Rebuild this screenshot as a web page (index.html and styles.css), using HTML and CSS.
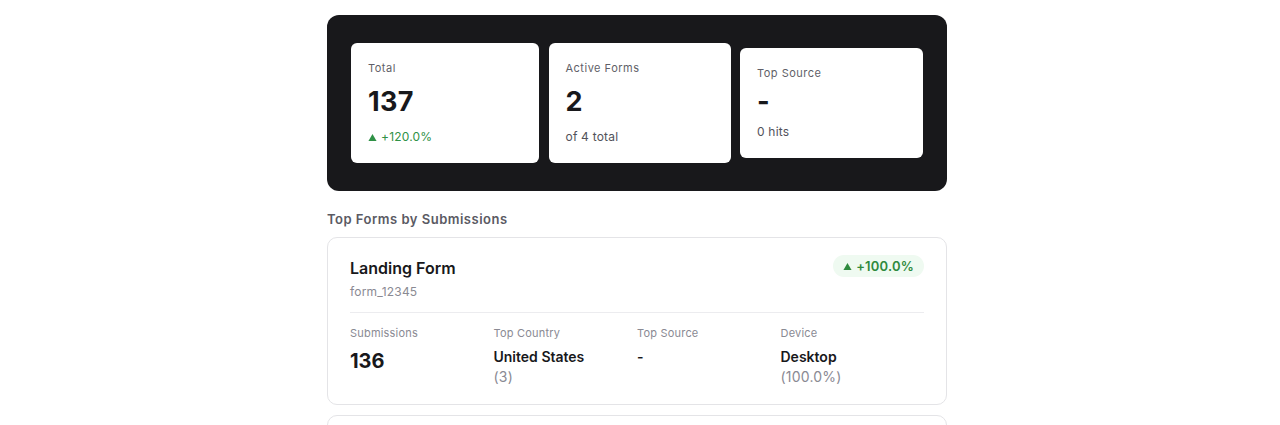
FILE: index.html
```html
<!doctype html>
<html>
<head>
<meta charset="utf-8">
<title>Form Analytics</title>
<link rel="stylesheet" href="styles.css">
</head>
<body>
<div class="main">
	<div class="summary">
		<div class="stat">
			<p class="stat-label">Total</p>
			<p class="stat-value">137</p>
			<p class="stat-sub up"><svg class="tri" viewBox="0 0 10 10"><path d="M5 1L9.5 9H0.5Z"/></svg>+120.0%</p>
		</div>
		<div class="stat">
			<p class="stat-label">Active Forms</p>
			<p class="stat-value">2</p>
			<p class="stat-sub">of 4 total</p>
		</div>
		<div class="stat">
			<p class="stat-label">Top Source</p>
			<p class="stat-value empty">-</p>
			<p class="stat-sub">0 hits</p>
		</div>
	</div>

	<h3 class="section-title">Top Forms by Submissions</h3>

	<div class="form-card">
		<div class="form-head">
			<div>
				<h4 class="form-name">Landing Form</h4>
				<p class="form-id">form_12345</p>
			</div>
			<span class="badge"><svg class="tri" viewBox="0 0 10 10"><path d="M5 1L9.5 9H0.5Z"/></svg>+100.0%</span>
		</div>
		<div class="form-stats">
			<div>
				<p class="fs-label">Submissions</p>
				<p class="fs-big">136</p>
			</div>
			<div>
				<p class="fs-label">Top Country</p>
				<p class="fs-value">United States</p>
				<p class="fs-sub">(3)</p>
			</div>
			<div>
				<p class="fs-label">Top Source</p>
				<p class="fs-value">-</p>
			</div>
			<div>
				<p class="fs-label">Device</p>
				<p class="fs-value">Desktop</p>
				<p class="fs-sub">(100.0%)</p>
			</div>
		</div>
	</div>

	<div class="form-card next"></div>
</div>
</body>
</html>
```

FILE: styles.css
```css
*{ margin:0; padding:0; box-sizing:border-box}
body{ background:#fff; font-family:Inter, "Noto Sans", sans-serif; color:#18181b; padding-right:6px}
.main{ width:620px; margin:15px auto 0;}

.summary{ background:#18181b; border-radius:12px; padding:28px 24px; display:grid; grid-template-columns:188px 182px 183px; justify-content:space-between; align-items:center}
.stat{ background:#fff; border-radius:6px; padding:17px 17px 18px}
.stat-label{ font-size:11px; line-height:16px; color:#5f5f68; letter-spacing:0.5px}
.stat-value{ font-size:27px; line-height:32px; font-weight:700; margin-top:10px; color:#18181b; letter-spacing:0.3px}
.stat-value.empty{ line-height:22px}
.stat-sub{ font-size:12px; line-height:16px; color:#52525b; margin-top:11px; display:flex; align-items:center; letter-spacing:0.2px}
.stat-sub.up{ color:#2f9146}
.tri{ width:8px; height:8px; fill:currentColor; margin-right:4px}
.stat-sub .tri{ width:9px; height:9px}

.section-title{ font-size:13px; line-height:18px; font-weight:600; color:#5a5a63; margin-top:19px; letter-spacing:0.5px}

.form-card{ border:1px solid #e4e4e7; border-radius:10px; padding:19px 22px 17px; margin-top:9px}
.form-card.next{ margin-top:10px; height:60px}
.form-head{ display:flex; justify-content:space-between; align-items:flex-start; padding-bottom:12px; border-bottom:1px solid #ececef}
.form-name{ font-size:16px; line-height:22px; font-weight:600}
.form-id{ font-size:12px; line-height:16px; color:#8a8a93; margin-top:5px; letter-spacing:0.2px}
.badge{ display:flex; align-items:center; height:22px; padding:0 10px; border-radius:11px; background:#effaf1; color:#2f8a3e; font-size:13px; font-weight:600; margin-top:-2px; letter-spacing:0.2px}
.badge .tri{ width:9px; height:9px}

.form-stats{ display:grid; grid-template-columns:repeat(4,1fr); padding-top:12px}
.fs-label{ font-size:11px; line-height:16px; color:#8a8a93; letter-spacing:0.2px}
.fs-value{ font-size:14px; line-height:20px; font-weight:600; margin-top:6px}
.fs-big{ font-size:20px; line-height:28px; font-weight:700; margin-top:6px}
.fs-sub{ font-size:14px; line-height:20px; color:#8a8a93; letter-spacing:0.2px}
```
